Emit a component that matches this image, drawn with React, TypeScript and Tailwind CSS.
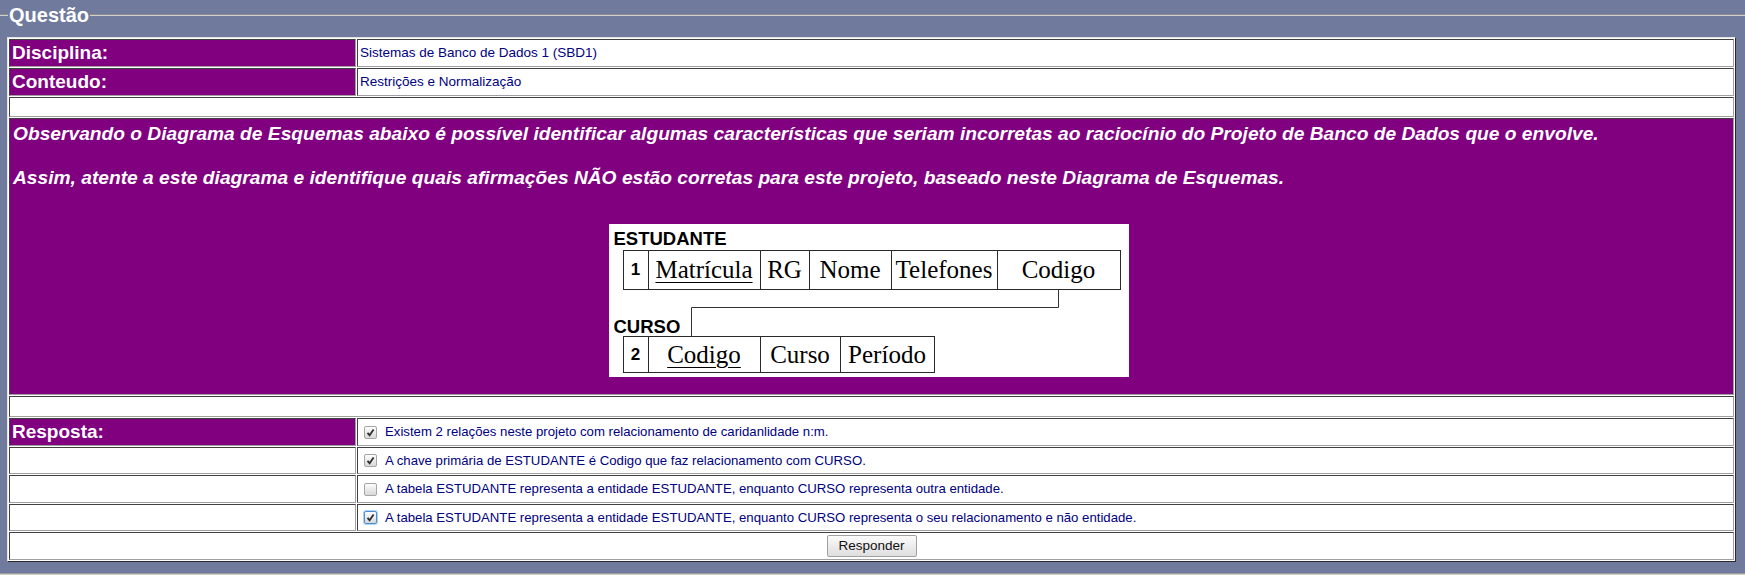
import React from 'react';

const inset =
  'border border-t-[#404040] border-l-[#404040] border-r-[#a0a0a0] border-b-[#a0a0a0]';

const Label: React.FC<{ h: string; children?: React.ReactNode }> = ({ h, children }) => (
  <div className={`${inset} ${h} flex items-center bg-[#800080] px-[2px] text-[19px] font-bold text-white`}>
    {children}
  </div>
);

const Value: React.FC<{ h: string; children?: React.ReactNode }> = ({ h, children }) => (
  <div className={`${inset} ${h} flex items-center bg-white px-[2px] text-[13.5px] text-[#000080]`}>
    {children}
  </div>
);

const Check: React.FC<{ checked?: boolean; focus?: boolean }> = ({ checked, focus }) => (
  <span
    className={`ml-[6px] mr-[8px] flex h-[13px] w-[13px] shrink-0 items-center justify-center rounded-[2px] border bg-linear-to-b from-[#fdfdfd] to-[#d8d8d8] ${
      focus ? 'border-[#4a8fd6] shadow-[0_0_0_1px_#b5d0ee]' : 'border-[#a5a5a5]'
    }`}
  >
    {checked && (
      <svg width="9" height="9" viewBox="0 0 9 9">
        <path d="M1.5 4.8 L3.6 7.2 L7.6 1.4" fill="none" stroke="#2e2e2e" strokeWidth="1.8" />
      </svg>
    )}
  </span>
);

const Answer: React.FC<{ h: string; checked?: boolean; focus?: boolean; text: string }> = ({
  h,
  checked,
  focus,
  text,
}) => (
  <div className={`${inset} ${h} flex items-center bg-white text-[13.2px] text-[#000080]`}>
    <Check checked={checked} focus={focus} />
    <span>{text}</span>
  </div>
);

const dCell = 'flex h-full items-center justify-center border-r border-[#2a2a2a]';
const serif = "font-['Liberation_Serif','Times_New_Roman',serif] text-[25px] font-normal";
const numCell = "font-['Liberation_Sans',Arial,sans-serif] text-[17px] font-bold";

// ESTUDANTE / CURSO schema picture
const Diagram: React.FC = () => (
  <div className="relative h-[153px] w-[520px] bg-white not-italic font-normal text-black">
    <svg className="absolute inset-0" width="520" height="153">
      <polyline points="449.5,66 449.5,83.5 82.5,83.5 82.5,112" fill="none" stroke="#333" strokeWidth="1" />
    </svg>
    <div className="relative pl-[5px] pt-[5px] font-['Liberation_Sans',Arial,sans-serif]">
      <div className="h-[21px] text-[18.5px] leading-[20px] font-bold">ESTUDANTE</div>
      <div className={`ml-[9px] flex h-[40px] w-[498px] border border-[#2a2a2a] ${serif}`}>
        <div className={`${dCell} w-[25px] ${numCell}`}>1</div>
        <div className={`${dCell} w-[112px]`}>
          <span className="underline decoration-1 underline-offset-[4px]">Matrícula</span>
        </div>
        <div className={`${dCell} w-[49px]`}>RG</div>
        <div className={`${dCell} w-[82px]`}>Nome</div>
        <div className={`${dCell} w-[106px]`}>Telefones</div>
        <div className="flex h-full flex-1 items-center justify-center">Codigo</div>
      </div>
      <div className="mt-[28px] h-[18px] text-[18.5px] leading-[18px] font-bold">CURSO</div>
      <div className={`ml-[9px] flex h-[37px] w-[312px] border border-[#2a2a2a] ${serif}`}>
        <div className={`${dCell} w-[25px] ${numCell}`}>2</div>
        <div className={`${dCell} w-[112px]`}>
          <span className="underline decoration-1 underline-offset-[4px]">Codigo</span>
        </div>
        <div className={`${dCell} w-[80px]`}>Curso</div>
        <div className="flex h-full flex-1 items-center justify-center">Período</div>
      </div>
    </div>
  </div>
);

export default function App() {
  return (
    <div className="h-[575px] w-[1745px] overflow-hidden bg-[#6f7a9d] font-['Liberation_Sans',Arial,sans-serif]">
      {/* legend */}
      <div className="flex h-[29px] items-center">
        <div className="w-[8px] border-t border-b border-t-[#8c8c8c] border-b-[#d0d0d0]" />
        <span className="px-px text-[20px] leading-[24px] font-bold text-white">Questão</span>
        <div className="flex-1 border-t border-b border-t-[#8c8c8c] border-b-[#d0d0d0]" />
      </div>

      {/* table */}
      <div className="mt-[8px] ml-[7px] w-[1729px] border border-t-[#e4e4e4] border-l-[#e4e4e4] border-r-[#2a2a2a] border-b-[#2a2a2a] bg-white p-px">
        <div className="grid grid-cols-[347px_1fr] gap-px bg-white">
          <Label h="h-[28px]">Disciplina:</Label>
          <Value h="h-[28px]">Sistemas de Banco de Dados 1 (SBD1)</Value>

          <Label h="h-[28px]">Conteudo:</Label>
          <Value h="h-[28px]">Restrições e Normalização</Value>

          <div className={`${inset} col-span-2 h-[20px] bg-white`} />

          <div className={`${inset} col-span-2 h-[277px] bg-[#800080] px-[3px] pt-[4px] text-[19.2px] leading-[22px] font-bold italic text-white`}>
            <p>
              Observando o Diagrama de Esquemas abaixo é possível identificar algumas características que seriam incorretas ao raciocínio do Projeto de Banco de Dados que o envolve.
            </p>
            <p className="mt-[22px]">
              Assim, atente a este diagrama e identifique quais afirmações NÃO estão corretas para este projeto, baseado neste Diagrama de Esquemas.
            </p>
            <div className="mt-[35px] flex justify-center pr-[6px]">
              <Diagram />
            </div>
          </div>

          <div className={`${inset} col-span-2 h-[21px] bg-white`} />

          <Label h="h-[28px]">Resposta:</Label>
          <Answer h="h-[28px]" checked text="Existem 2 relações neste projeto com relacionamento de caridanlidade n:m." />

          <div className={`${inset} h-[27px] bg-white`} />
          <Answer h="h-[27px]" checked text="A chave primária de ESTUDANTE é Codigo que faz relacionamento com CURSO." />

          <div className={`${inset} h-[28px] bg-white`} />
          <Answer h="h-[28px]" text="A tabela ESTUDANTE representa a entidade ESTUDANTE, enquanto CURSO representa outra entidade." />

          <div className={`${inset} h-[27px] bg-white`} />
          <Answer
            h="h-[27px]"
            checked
            focus
            text="A tabela ESTUDANTE representa a entidade ESTUDANTE, enquanto CURSO representa o seu relacionamento e não entidade."
          />

          <div className={`${inset} col-span-2 flex h-[28px] items-center justify-center bg-white`}>
            <button className="h-[22px] w-[90px] rounded-[2px] border border-[#a0a0a0] bg-linear-to-b from-[#fbfbfb] to-[#dedede] text-[13.5px] text-[#111]">
              Responder
            </button>
          </div>
        </div>
      </div>

      {/* fieldset bottom */}
      <div className="mt-[11px] border-t border-b border-t-[#9a9a9a] border-b-[#cfcfcf]" />
    </div>
  );
}
